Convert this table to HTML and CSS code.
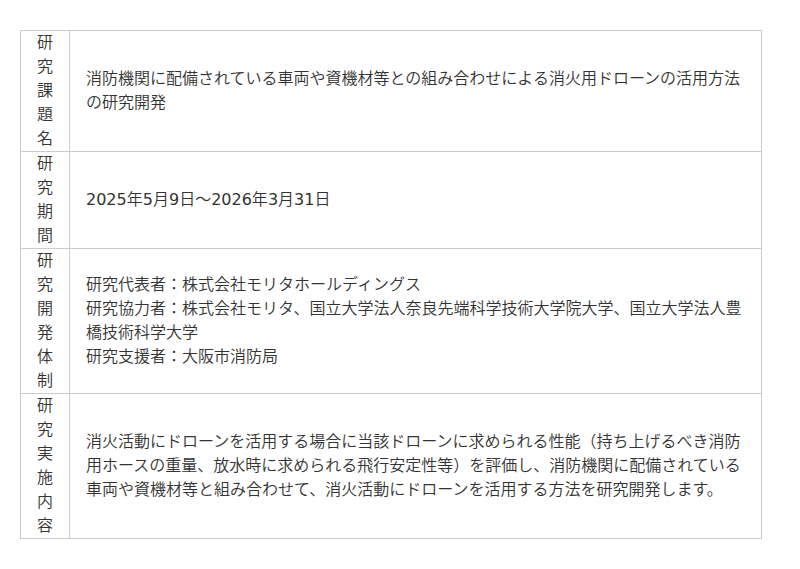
FILE: index.html
```html
<!DOCTYPE html>
<html lang="ja">
<head>
<meta charset="utf-8">
<link rel="stylesheet" href="styles.css">
</head>
<body>
<div class="wrap">
<table class="info">
<colgroup><col class="c-label"><col class="c-body"></colgroup>
<tr class="r1"><th>研究課題名</th><td>消防機関に配備されている車両や資機材等との組み合わせによる消火用ドローンの活用方法の研究開発</td></tr>
<tr class="r2"><th>研究期間</th><td><span class="num">2025</span>年<span class="num">5</span>月<span class="num">9</span>日～<span class="num">2026</span>年<span class="num">3</span>月<span class="num">31</span>日</td></tr>
<tr class="r3"><th>研究開発体制</th><td>研究代表者：株式会社モリタホールディングス<br>研究協力者：株式会社モリタ、国立大学法人奈良先端科学技術大学院大学、国立大学法人豊橋技術科学大学<br>研究支援者：大阪市消防局</td></tr>
<tr class="r4"><th>研究実施内容</th><td>消火活動にドローンを活用する場合に当該ドローンに求められる性能（持ち上げるべき消防用ホースの重量、放水時に求められる飛行安定性等）を評価し、消防機関に配備されている車両や資機材等と組み合わせて、消火活動にドローンを活用する方法を研究開発します。</td></tr>
</table>
</div>
</body>
</html>
```
FILE: styles.css
```css
html, body {
  margin: 0;
  padding: 0;
  background: #fff;
}
.wrap {
  padding: 30px 0 0 20px;
}
.info {
  width: 742px;
  table-layout: fixed;
  border-collapse: collapse;
  font-family: "DejaVu Sans", "Noto Sans CJK JP", sans-serif;
  font-size: 16px;
  font-weight: 350;
  line-height: 24px;
  color: #333;
}
.c-label { width: 49px; }
.info th, .info td {
  border: 1px solid #ccc;
  vertical-align: middle;
}
.info th {
  font-weight: 350;
  text-align: center;
  padding: 0 15px;
  word-break: break-all;
}
.info td {
  padding: 0 16px;
  text-align: left;
}
.num {
  font-weight: 400;
}
```
